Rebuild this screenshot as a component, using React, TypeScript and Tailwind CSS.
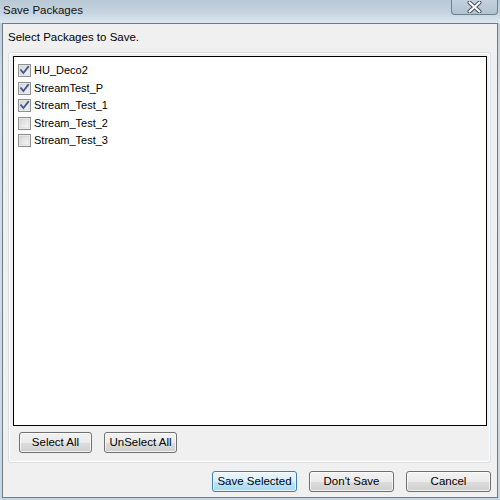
import React from "react";

const items = [
  { label: "HU_Deco2", checked: true },
  { label: "StreamTest_P", checked: true },
  { label: "Stream_Test_1", checked: true },
  { label: "Stream_Test_2", checked: false },
  { label: "Stream_Test_3", checked: false },
];

function CheckBox({ checked }: { checked: boolean }) {
  return (
    <svg width="13" height="13" viewBox="0 0 13 13" className="shrink-0">
      <defs>
        <linearGradient id="cbg" x1="0" y1="0" x2="1" y2="1">
          <stop offset="0" stopColor="#d4d6d9" />
          <stop offset="1" stopColor="#f7f7f7" />
        </linearGradient>
      </defs>
      <rect x="0.5" y="0.5" width="12" height="12" fill="#f4f4f4" stroke="#8f8f8f" />
      <rect x="2" y="2" width="9" height="9" fill="url(#cbg)" stroke="#c8cbcf" strokeWidth="0.6" />
      {checked && (
        <path d="M3 6.2 L5.4 9 L10.2 2.8" fill="none" stroke="#44598f" strokeWidth="1.8" strokeLinecap="square" />
      )}
    </svg>
  );
}

function Btn({ label, width, primary }: { label: string; width: string; primary?: boolean }) {
  return (
    <div
      className={
        "flex items-center justify-center h-[21px] rounded-[3px] border text-[11.5px] text-black " +
        width +
        (primary
          ? " border-[#3c7fb1] bg-[linear-gradient(to_bottom,#eaf6fd_0%,#d9f0fc_50%,#bee6fd_51%,#a7d9f5_100%)]"
          : " border-[#707070] bg-[linear-gradient(to_bottom,#f2f2f2_0%,#ebebeb_50%,#dddddd_51%,#cfcfcf_100%)]")
      }
      style={{ boxShadow: "inset 0 0 0 1px rgba(255,255,255,0.7)" }}
    >
      {label}
    </div>
  );
}

export default function App() {
  return (
    <div
      className="w-[500px] h-[500px] flex flex-col bg-[linear-gradient(to_bottom,#bccbd8,#d3dfe9_20%,#c9d7e3)] overflow-hidden"
      style={{ fontFamily: '"Liberation Sans", Arial, sans-serif' }}
    >
      {/* Title bar */}
      <div className="h-[23px] flex items-start justify-between bg-[linear-gradient(to_bottom,#b8c8d5,#c6d4e0_55%,#dde7ef)]">
        <div className="pl-[3px] pt-[3px] text-[11.5px] leading-[15px] text-[#111]">Save Packages</div>
        <div className="mr-[2px] w-[47px] h-[15px] rounded-b-[4px] border border-t-0 border-[#6f7f8f] bg-[linear-gradient(to_bottom,#c4d1dd,#b2c2d0)] flex items-center justify-center">
          <svg width="15" height="12" viewBox="0 0 15 12">
            <path d="M2.5 1.5 L12.5 10.5 M12.5 1.5 L2.5 10.5" stroke="#3e4957" strokeWidth="4" strokeLinecap="round" />
            <path d="M2.5 1.5 L12.5 10.5 M12.5 1.5 L2.5 10.5" stroke="#ffffff" strokeWidth="2.2" strokeLinecap="round" />
          </svg>
        </div>
      </div>
      {/* Client */}
      <div className="mx-[2px] mb-[2px] flex-1 border border-[#6d7b89] bg-[#f0f0f0] flex flex-col pl-[5px] pr-[6px]">
        <div className="h-[28px] pt-[6px] text-[11.5px] leading-[14px] text-black">Select Packages to Save.</div>
        <div className="h-[411px] rounded-[3px] border border-[#d5dfe5] flex flex-col pt-[3px] pl-[4px] pr-[3px]"
          style={{ boxShadow: "inset 0 0 0 1px #ffffff" }}>
          <div className="h-[370px] border border-black bg-white pt-[5px] pl-[4px] flex flex-col">
            {items.map((it) => (
              <div key={it.label} className="h-[17.5px] flex items-center gap-[3px]">
                <CheckBox checked={it.checked} />
                <span className="text-[11px] leading-[13px] text-black">{it.label}</span>
              </div>
            ))}
          </div>
          <div className="mt-[6px] pl-[6px] flex gap-[12px]">
            <Btn label="Select All" width="w-[73px]" />
            <Btn label="UnSelect All" width="w-[73px]" />
          </div>
        </div>
        <div className="mt-[8px] flex justify-end gap-[12px]">
          <Btn label="Save Selected" width="w-[85px]" primary />
          <Btn label="Don't Save" width="w-[85px]" />
          <Btn label="Cancel" width="w-[85px]" />
        </div>
      </div>
    </div>
  );
}
